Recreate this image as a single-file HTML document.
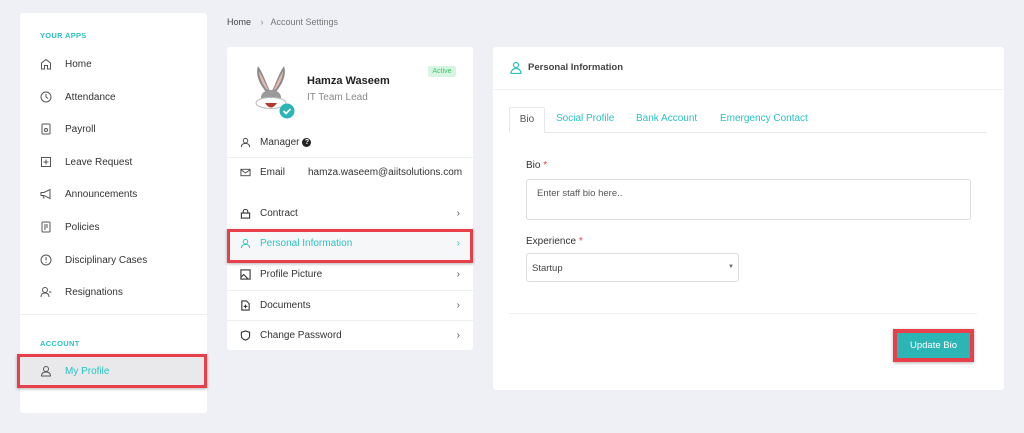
<!DOCTYPE html>
<html><head><meta charset="utf-8"><style>
*{box-sizing:border-box;margin:0;padding:0}
body{width:1024px;height:433px;background:#eef0f6;font-family:"Liberation Sans",sans-serif;color:#333;position:relative;overflow:hidden;font-size:10px}
.abs{position:absolute}
.card{position:absolute;background:#fff;border-radius:3px}
.sec{position:absolute;left:40px;font-size:7.5px;font-weight:bold;color:#2bc2c0;letter-spacing:.3px}
.nav{position:absolute;left:40px;font-size:10px;color:#333;display:flex;align-items:center}
.nav svg{width:12px;height:12px;margin-right:13px}
.row{position:absolute;left:240px;width:220px;font-size:10px;display:flex;align-items:center;color:#333}
.row svg{width:11px;height:11px;margin-right:9px}
.chev{position:absolute;right:0;color:#555;font-size:10px}
.hr{position:absolute;height:1px;background:#eceef2}
.teal{color:#2bc2c0}
</style></head><body>
<div class="card" style="left:20px;top:13px;width:187px;height:400px"></div>
<div class="sec" style="top:31px">YOUR APPS</div>
<div class="nav" style="top:58px"><svg viewBox="0 0 12 12" fill="none" stroke="#555" stroke-width="1"><path d="M1.5 11V5L6 1.5 10.5 5V11H7.5V7.5h-3V11z"/></svg>Home</div>
<div class="nav" style="top:91px"><svg viewBox="0 0 12 12" fill="none" stroke="#555" stroke-width="1"><circle cx="6" cy="6" r="5"/><path d="M6 3v3l2 1.5"/></svg>Attendance</div>
<div class="nav" style="top:123px"><svg viewBox="0 0 12 12" fill="none" stroke="#555" stroke-width="1"><rect x="2" y="1" width="8" height="10" rx="1"/><circle cx="6" cy="7" r="1.5"/></svg>Payroll</div>
<div class="nav" style="top:156px"><svg viewBox="0 0 12 12" fill="none" stroke="#555" stroke-width="1"><rect x="1.5" y="1.5" width="9" height="9"/><path d="M6 3.5v5M3.5 6h5"/></svg>Leave Request</div>
<div class="nav" style="top:188px"><svg viewBox="0 0 12 12" fill="none" stroke="#555" stroke-width="1"><path d="M1 4.5h3L10 1.5v9L4 7.5H1zM3 7.5l1 3"/></svg>Announcements</div>
<div class="nav" style="top:221px"><svg viewBox="0 0 12 12" fill="none" stroke="#555" stroke-width="1"><rect x="2" y="1" width="8" height="10" rx="1"/><path d="M4 4h4M4 6h4M4 8h2"/></svg>Policies</div>
<div class="nav" style="top:254px"><svg viewBox="0 0 12 12" fill="none" stroke="#555" stroke-width="1"><circle cx="6" cy="6" r="5"/><path d="M6 3v3.5M6 8v1"/></svg>Disciplinary Cases</div>
<div class="nav" style="top:286px"><svg viewBox="0 0 12 12" fill="none" stroke="#555" stroke-width="1"><circle cx="5" cy="4" r="2.5"/><path d="M1 11c0-3 2-4 4-4s4 1 4 4M9 6h2.5"/></svg>Resignations</div>
<div class="hr" style="left:20px;top:314px;width:187px"></div>
<div class="sec" style="top:339px">ACCOUNT</div>
<div class="abs" style="left:17px;top:354px;width:190px;height:34px;border:3px solid #e8404a;background:#e9e9ec;box-shadow:0 1px 3px rgba(0,0,0,.3)"></div>
<div class="nav teal" style="top:365px;color:#2bc2c0"><svg viewBox="0 0 12 12" fill="none" stroke="#555" stroke-width="1"><circle cx="6" cy="4" r="2.5"/><path d="M1.5 11c0-3 2-4 4.5-4s4.5 1 4.5 4z"/></svg>My Profile</div>

<div class="abs" style="left:227px;top:17px;font-size:9px;color:#444">Home <span style="color:#888;margin:0 7px">›</span><span style="color:#777">Account Settings</span></div>

<div class="card" style="left:227px;top:47px;width:246px;height:303px"></div>
<svg class="abs" style="left:246px;top:63px" width="56" height="56" viewBox="0 0 56 56">
<path d="M12 3C9 12 14 22 21 30L24 28C20 20 17 10 12 3z" fill="#8a8a8a"/>
<path d="M38 3C41 12 36 22 29 30L26 28C30 20 33 10 38 3z" fill="#8a8a8a"/>
<path d="M13 8C13 15 17 22 21 27L22 26C19 20 16 13 13 8zM37 8C37 15 33 22 29 27L28 26C31 20 34 13 37 8z" fill="#e8b8b0"/>
<ellipse cx="25" cy="34" rx="10" ry="7" fill="#9a9a9a"/>
<ellipse cx="25" cy="40" rx="15" ry="5.5" fill="#fff" stroke="#bbb"/>
<path d="M19 40q6 9 12 0z" fill="#b03a2e"/>
<circle cx="41" cy="48" r="7.5" fill="#2bb5b5"/><path d="M37.5 48l2.5 2.5 4.5-4.5" stroke="#fff" stroke-width="1.8" fill="none"/>
</svg>
<div class="abs" style="left:307px;top:75px;font-size:11px;font-weight:bold;color:#222">Hamza Waseem</div>
<div class="abs" style="left:307px;top:92px;font-size:10px;color:#888">IT Team Lead</div>
<div class="abs" style="left:428px;top:66px;width:28px;height:11px;background:#d8f5e3;color:#3cc46a;font-size:7px;text-align:center;line-height:11px;border-radius:2px">Active</div>
<div class="row" style="top:137px"><svg viewBox="0 0 12 12" fill="none" stroke="#444" stroke-width="1"><circle cx="6" cy="4" r="2.5"/><path d="M1.5 11c0-3 2-4 4.5-4s4.5 1 4.5 4"/></svg>Manager <span style="display:inline-block;width:9px;height:9px;border-radius:50%;background:#222;color:#fff;font-size:7px;text-align:center;line-height:9px;margin-left:3px;font-weight:bold">?</span></div>
<div class="hr" style="left:227px;top:157px;width:246px"></div>
<div class="row" style="top:167px"><svg viewBox="0 0 12 12" fill="none" stroke="#444" stroke-width="1"><rect x="1" y="2.5" width="10" height="7"/><path d="M1 3l5 3.5L11 3"/></svg>Email<span style="position:absolute;left:68px">hamza.waseem@aiitsolutions.com</span></div>
<div class="row" style="top:208px"><svg viewBox="0 0 12 12" fill="none" stroke="#333" stroke-width="1.2"><rect x="1.5" y="5.5" width="9" height="5.5"/><path d="M3.5 5.5V4a2.5 2.5 0 0 1 5 0v1.5"/></svg>Contract<span class="chev">›</span></div>
<div class="abs" style="left:227px;top:229px;width:246px;height:34px;border:3px solid #e8404a;background:#f6f7f9;box-shadow:0 1px 3px rgba(0,0,0,.3)"></div>
<div class="row" style="top:238px;color:#2bc2c0"><svg viewBox="0 0 12 12" fill="none" stroke="#2bc2c0" stroke-width="1"><circle cx="6" cy="4" r="2.5"/><path d="M1.5 11c0-3 2-4 4.5-4s4.5 1 4.5 4"/></svg>Personal Information<span class="chev" style="color:#2bc2c0">›</span></div>
<div class="row" style="top:269px"><svg viewBox="0 0 12 12" fill="none" stroke="#333" stroke-width="1.2"><rect x="1" y="1" width="10" height="10"/><path d="M1 9l3-3 5 5M7 4.5h.1"/></svg>Profile Picture<span class="chev">›</span></div>
<div class="hr" style="left:227px;top:290px;width:246px"></div>
<div class="row" style="top:300px"><svg viewBox="0 0 12 12" fill="none" stroke="#333" stroke-width="1.2"><path d="M2 1h5l3 3v7H2z M6 5v4M4 7h4"/></svg>Documents<span class="chev">›</span></div>
<div class="hr" style="left:227px;top:320px;width:246px"></div>
<div class="row" style="top:330px"><svg viewBox="0 0 12 12" fill="none" stroke="#333" stroke-width="1.2"><path d="M6 1l4.5 1.5V6c0 2.5-2 4.3-4.5 5C3.5 10.3 1.5 8.5 1.5 6V2.5z"/></svg>Change Password<span class="chev">›</span></div>

<div class="card" style="left:493px;top:47px;width:511px;height:343px"></div>
<svg class="abs" style="left:510px;top:61px" width="12" height="13" viewBox="0 0 12 13" fill="none" stroke="#2bc2c0" stroke-width="1.2"><circle cx="6" cy="4" r="2.5"/><path d="M1 12.5c0-3 2-5 5-5s5 2 5 5z"/></svg>
<div class="abs" style="left:528px;top:62px;font-size:9.5px;color:#444;font-weight:bold">Personal Information</div>
<div class="hr" style="left:493px;top:89px;width:511px;background:#f2f3f6"></div>
<div class="abs" style="left:509px;top:132px;width:478px;height:1px;background:#e6e8ec"></div>
<div class="abs" style="left:509px;top:107px;width:36px;height:26px;border:1px solid #e6e8ec;border-bottom:1px solid #fff;background:#fff;border-radius:2px 2px 0 0;font-size:10px;color:#555;text-align:center;line-height:24px">Bio</div>
<div class="abs" style="left:556px;top:113px;font-size:10px;color:#2bc2c0">Social Profile</div>
<div class="abs" style="left:636px;top:113px;font-size:10px;color:#2bc2c0">Bank Account</div>
<div class="abs" style="left:720px;top:113px;font-size:10px;color:#2bc2c0">Emergency Contact</div>
<div class="abs" style="left:526px;top:160px;font-size:10px;color:#333">Bio <span style="color:#e8404a">*</span></div>
<div class="abs" style="left:526px;top:179px;width:445px;height:41px;border:1px solid #ddd;border-radius:3px;font-size:9.5px;color:#555;padding:8px 10px">Enter staff bio here..</div>
<div class="abs" style="left:526px;top:236px;font-size:10px;color:#333">Experience <span style="color:#e8404a">*</span></div>
<div class="abs" style="left:526px;top:253px;width:213px;height:29px;border:1px solid #ddd;border-radius:3px;font-size:9.5px;color:#444;padding:9px 5px">Startup<span style="position:absolute;right:4px;top:10px;font-size:6px;color:#666">▼</span></div>
<div class="hr" style="left:509px;top:313px;width:468px;background:#eef0f3"></div>
<div class="abs" style="left:893px;top:329px;width:81px;height:33px;border:4px solid #e8404a;background:#2bb5b5;color:#fff;font-size:9.5px;text-align:center;line-height:25px;box-shadow:0 1px 3px rgba(0,0,0,.3)">Update Bio</div>
</body></html>
